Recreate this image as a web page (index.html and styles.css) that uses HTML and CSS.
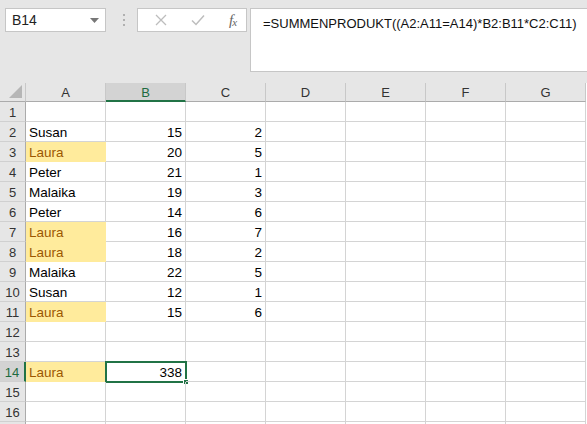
FILE: index.html
```html
<!DOCTYPE html>
<html>
<head>
<meta charset="utf-8">
<link rel="stylesheet" href="styles.css">
</head>
<body>
<div class="toolbar">
  <div class="namebox"><span>B14</span><svg class="caret" width="9" height="5" viewBox="0 0 9 5"><path d="M0 0h9L4.5 5z" fill="#777"/></svg></div>
  <div class="dots"><i></i><i></i><i></i></div>
  <div class="fnbox">
    <svg class="ic" width="12" height="12" viewBox="0 0 12 12"><path d="M1 1L11 11M11 1L1 11" stroke="#bdbdbd" stroke-width="1.3"/></svg>
    <svg class="ic" width="14" height="12" viewBox="0 0 14 12"><path d="M1 6.5L5 10.5L13 1.5" stroke="#bdbdbd" stroke-width="1.5" fill="none"/></svg>
    <span class="fx">f<sub>x</sub></span>
  </div>
  <div class="formula">=SUMMENPRODUKT((A2:A11=A14)*B2:B11*C2:C11)</div>
</div>
<div class="sheet">
  <div class="corner"><svg width="13" height="13" viewBox="0 0 13 13"><path d="M13 0V13H0z" fill="#b6b6b6"/></svg></div>
  <div class="ch">A</div><div class="ch sel">B</div><div class="ch">C</div><div class="ch">D</div><div class="ch">E</div><div class="ch">F</div><div class="ch">G</div>

  <div class="rh">1</div><div class="c"></div><div class="c"></div><div class="c"></div><div class="c"></div><div class="c"></div><div class="c"></div><div class="c"></div>
  <div class="rh">2</div><div class="c">Susan</div><div class="c n">15</div><div class="c n">2</div><div class="c"></div><div class="c"></div><div class="c"></div><div class="c"></div>
  <div class="rh">3</div><div class="c hl">Laura</div><div class="c n">20</div><div class="c n">5</div><div class="c"></div><div class="c"></div><div class="c"></div><div class="c"></div>
  <div class="rh">4</div><div class="c">Peter</div><div class="c n">21</div><div class="c n">1</div><div class="c"></div><div class="c"></div><div class="c"></div><div class="c"></div>
  <div class="rh">5</div><div class="c">Malaika</div><div class="c n">19</div><div class="c n">3</div><div class="c"></div><div class="c"></div><div class="c"></div><div class="c"></div>
  <div class="rh">6</div><div class="c">Peter</div><div class="c n">14</div><div class="c n">6</div><div class="c"></div><div class="c"></div><div class="c"></div><div class="c"></div>
  <div class="rh">7</div><div class="c hl">Laura</div><div class="c n">16</div><div class="c n">7</div><div class="c"></div><div class="c"></div><div class="c"></div><div class="c"></div>
  <div class="rh">8</div><div class="c hl">Laura</div><div class="c n">18</div><div class="c n">2</div><div class="c"></div><div class="c"></div><div class="c"></div><div class="c"></div>
  <div class="rh">9</div><div class="c">Malaika</div><div class="c n">22</div><div class="c n">5</div><div class="c"></div><div class="c"></div><div class="c"></div><div class="c"></div>
  <div class="rh">10</div><div class="c">Susan</div><div class="c n">12</div><div class="c n">1</div><div class="c"></div><div class="c"></div><div class="c"></div><div class="c"></div>
  <div class="rh">11</div><div class="c hl">Laura</div><div class="c n">15</div><div class="c n">6</div><div class="c"></div><div class="c"></div><div class="c"></div><div class="c"></div>
  <div class="rh">12</div><div class="c"></div><div class="c"></div><div class="c"></div><div class="c"></div><div class="c"></div><div class="c"></div><div class="c"></div>
  <div class="rh">13</div><div class="c"></div><div class="c"></div><div class="c"></div><div class="c"></div><div class="c"></div><div class="c"></div><div class="c"></div>
  <div class="rh sel">14</div><div class="c hl">Laura</div><div class="c n active">338<span class="handle"></span></div><div class="c"></div><div class="c"></div><div class="c"></div><div class="c"></div><div class="c"></div>
  <div class="rh">15</div><div class="c"></div><div class="c"></div><div class="c"></div><div class="c"></div><div class="c"></div><div class="c"></div><div class="c"></div>
  <div class="rh">16</div><div class="c"></div><div class="c"></div><div class="c"></div><div class="c"></div><div class="c"></div><div class="c"></div><div class="c"></div>
  <div class="rh"></div><div class="c"></div><div class="c"></div><div class="c"></div><div class="c"></div><div class="c"></div><div class="c"></div><div class="c"></div>
</div>
</body>
</html>
```
FILE: styles.css
```css
* { box-sizing: border-box; }
html, body { margin: 0; padding: 0; }
body {
  width: 587px;
  height: 424px;
  overflow: hidden;
  background: #ffffff;
  font-family: "Liberation Sans", Arial, sans-serif;
  color: #000;
}
.toolbar {
  height: 83px;
  background: #e6e6e6;
  display: flex;
  align-items: flex-start;
  padding: 8px 0 0 5px;
}
.namebox {
  width: 101px;
  height: 24px;
  background: #fff;
  border: 1px solid #c6c6c6;
  display: flex;
  align-items: center;
  justify-content: space-between;
  padding: 0 6px 0 6px;
  font-size: 14px;
  color: #222;
}
.namebox .caret { margin-top: 1px; }
.dots {
  width: 31px;
  height: 24px;
  display: flex;
  flex-direction: column;
  align-items: center;
  justify-content: center;
  gap: 3px;
  padding-left: 4px;
}
.dots i {
  display: block;
  width: 2px;
  height: 2px;
  background: #b0b0b0;
}
.fnbox {
  width: 110px;
  height: 24px;
  background: #fff;
  border: 1px solid #c6c6c6;
  display: flex;
  align-items: center;
  padding: 0 0 0 17px;
}
.fnbox .ic:nth-child(2) { margin-left: 24px; }
.fx {
  margin-left: 24px;
  font-family: "Liberation Serif", serif;
  font-style: italic;
  font-size: 15px;
  color: #666;
  letter-spacing: -1px;
}
.fx sub { font-size: 11px; vertical-align: -1px; }
.formula {
  margin-left: 3px;
  flex: 1;
  height: 64px;
  background: #fff;
  border: 1px solid #c6c6c6;
  border-right: none;
  font-size: 13px;
  padding: 7px 0 0 12px;
  color: #111;
}
.sheet {
  display: grid;
  grid-template-columns: 26px repeat(7, 80px);
  grid-auto-rows: 20px;
  grid-template-rows: 19px;
}
.corner {
  background: #e6e6e6;
  border-right: 1px solid #c8c8c8;
  border-bottom: 1px solid #ababab;
  display: flex;
  align-items: flex-end;
  justify-content: flex-end;
  padding: 0 3px 3px 0;
}
.ch {
  background: #e6e6e6;
  border-right: 1px solid #c8c8c8;
  border-bottom: 1px solid #ababab;
  text-align: center;
  font-size: 13px;
  line-height: 19px;
  color: #333;
}
.ch.sel {
  background: #d3d3d3;
  border-bottom: 2px solid #217346;
  color: #1e6b41;
}
.rh {
  background: #e6e6e6;
  border-right: 1px solid #ababab;
  border-bottom: 1px solid #d0d0d0;
  text-align: center;
  font-size: 13px;
  line-height: 20px;
  padding-top: 1px;
  color: #333;
}
.rh.sel {
  background: #d3d3d3;
  border-right: 2px solid #217346;
  color: #1e6b41;
}
.c {
  border-right: 1px solid #d4d4d4;
  border-bottom: 1px solid #d4d4d4;
  font-size: 13.5px;
  line-height: 20px;
  padding: 1px 3px 0;
  white-space: nowrap;
  position: relative;
}
.c.n { text-align: right; }
.c.hl {
  background: #ffeb9c;
  color: #9c5700;
  border-color: #ffeb9c;
}
.c.active {
  border: 2px solid #217346;
  margin: -1px 0 0 -1px;
  width: 82px;
  height: 22px;
  line-height: 18px;
  padding: 1px 3px 0;
}
.handle {
  position: absolute;
  right: -4px;
  bottom: -4px;
  width: 6px;
  height: 6px;
  background: #217346;
  border: 1px solid #fff;
}
```
